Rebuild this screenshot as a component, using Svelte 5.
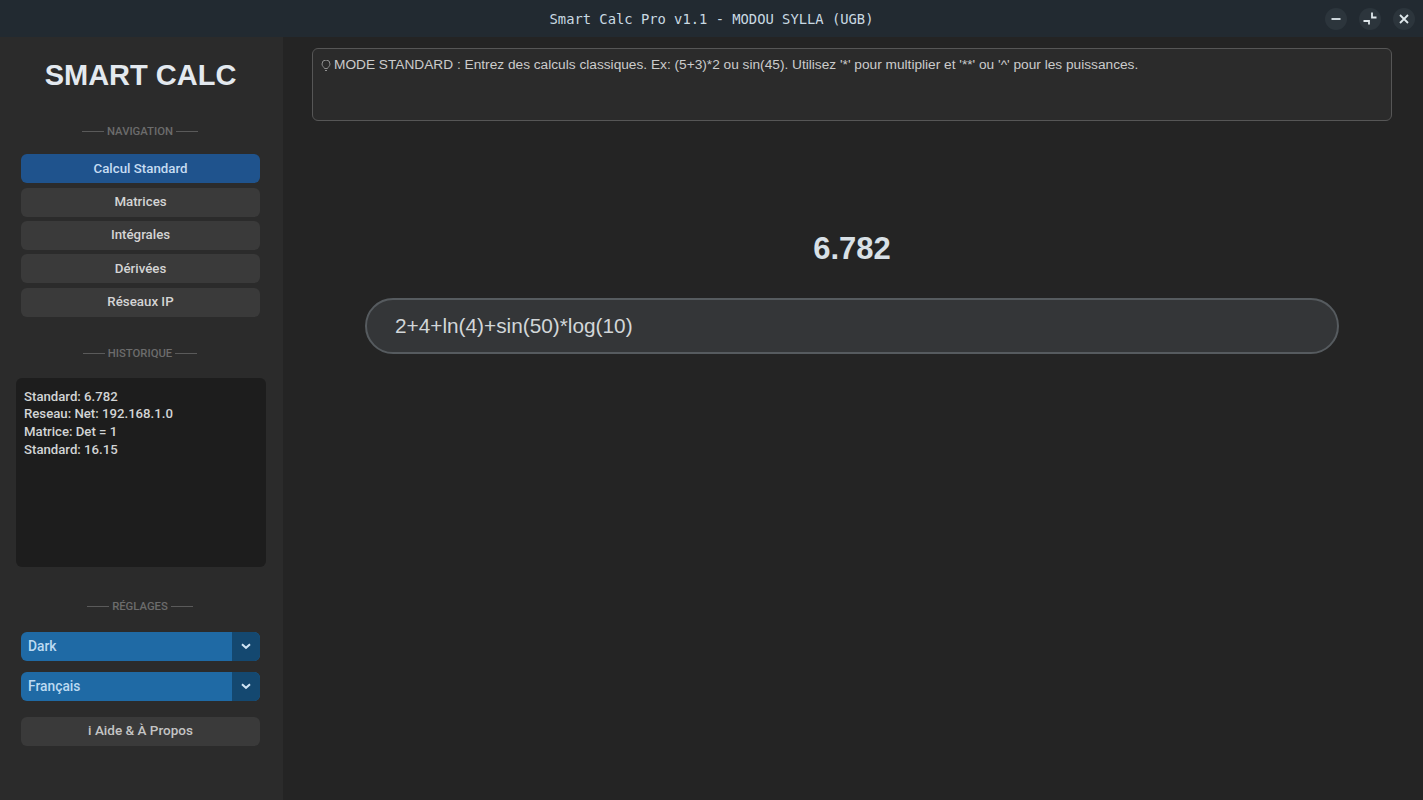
<script>
  const nav = ['Calcul Standard', 'Matrices', 'Intégrales', 'Dérivées', 'Réseaux IP'];
  const history = ['Standard: 6.782', 'Reseau: Net: 192.168.1.0', 'Matrice: Det = 1', 'Standard: 16.15'];
  const selects = ['Dark', 'Français'];
</script>

<div class="window">
  <header class="titlebar">
    <span class="title">Smart Calc Pro v1.1 - MODOU SYLLA (UGB)</span>
    <div class="controls">
      <button class="ctl" aria-label="Réduire">
        <svg width="12" height="12" viewBox="0 0 12 12"><path d="M1.500 6h9" /></svg>
      </button>
      <button class="ctl" aria-label="Restaurer">
        <svg width="16" height="16" viewBox="0 0 16 16"><path d="M10 1.500v5h4.500M1.500 10H7v3.500" /></svg>
      </button>
      <button class="ctl" aria-label="Fermer">
        <svg width="12" height="12" viewBox="0 0 12 12"><path d="M2 2l8 8M10 2l-8 8" /></svg>
      </button>
    </div>
  </header>

  <div class="body">
    <aside class="sidebar">
      <h1 class="logo">SMART CALC</h1>

      <div class="section nav-head">NAVIGATION</div>
      <nav class="nav">
        {#each nav as item, i}
          <button class="btn" class:active={i === 0}>{item}</button>
        {/each}
      </nav>

      <div class="section hist-head">HISTORIQUE</div>
      <div class="history">
        {#each history as line}
          <div>{line}</div>
        {/each}
      </div>

      <div class="section set-head">RÉGLAGES</div>
      <div class="selects">
        {#each selects as s}
          <div class="select">
            <span class="value">{s}</span>
            <span class="arrow">
              <svg width="12" height="12" viewBox="0 0 12 12"><path d="M2 4.200l4 3.600 4-3.600" /></svg>
            </span>
          </div>
        {/each}
      </div>
      <button class="btn help">i Aide &amp; À Propos</button>
    </aside>

    <main class="main">
      <div class="hint"><svg class="bulb" width="10" height="12" viewBox="0 0 10 12"><path d="M3.500 8.500C3 7 1 6.200 1 4a4 4 0 0 1 8 0c0 2.200-2 3-2.500 4.500zM4 10.500h2" /></svg>MODE STANDARD : Entrez des calculs classiques. Ex: (5+3)*2 ou sin(45). Utilisez '*' pour multiplier et '**' ou '^' pour les puissances.</div>
      <div class="result">6.782</div>
      <div class="input">2+4+ln(4)+sin(50)*log(10)</div>
    </main>
  </div>
</div>

<style>
  :global(body) {
    margin: 0;
    background: #242424;
  }
  .window {
    width: 1423px;
    height: 800px;
    display: flex;
    flex-direction: column;
    overflow: hidden;
    font-family: Roboto, "Liberation Sans", sans-serif;
    color: #dce4e8;
  }
  .titlebar {
    height: 37px;
    flex: none;
    background: #222a31;
    display: flex;
    align-items: center;
    justify-content: center;
    position: relative;
  }
  .title {
    font-family: "DejaVu Sans Mono", monospace;
    font-size: 13.800px;
    color: #c9d9e2;
  }
  .controls {
    position: absolute;
    right: 8px;
    top: 8px;
    display: flex;
    gap: 12px;
  }
  .ctl {
    width: 22px;
    height: 22px;
    padding: 0;
    border: 0;
    border-radius: 50%;
    background: #2c353c;
    display: flex;
    align-items: center;
    justify-content: center;
  }
  .ctl path {
    fill: none;
    stroke: #dfe8ec;
    stroke-width: 1.800;
  }
  .body {
    flex: 1;
    display: flex;
    min-height: 0;
  }
  .sidebar {
    width: 283px;
    flex: none;
    background: #2b2b2b;
    box-sizing: border-box;
    padding: 0 23px 0 21px;
    display: flex;
    flex-direction: column;
  }
  .logo {
    margin: 22px 0 0;
    height: 33px;
    line-height: 33px;
    font-family: "Liberation Sans", sans-serif;
    font-size: 29px;
    font-weight: 700;
    text-align: center;
    color: #e3e9ef;
    white-space: nowrap;
  }
  .section {
    display: flex;
    align-items: center;
    justify-content: center;
    gap: 3px;
    height: 14px;
    padding-right: 1px;
    font-size: 11.300px;
    font-weight: 500;
    color: #6c6c6c;
  }
  .section::before,
  .section::after {
    content: "";
    width: 22px;
    height: 1px;
    background: #5a5a5a;
  }
  .nav-head { margin-top: 32px; }
  .hist-head { margin-top: 29.800px; }
  .set-head { margin-top: 33px; }
  .nav {
    margin-top: 16.200px;
    display: flex;
    flex-direction: column;
    gap: 4.400px;
  }
  .btn {
    height: 29px;
    padding: 0 0 1px;
    border: 0;
    border-radius: 6px;
    background: #3a3a3a;
    color: #d4d4d4;
    font-family: inherit;
    font-size: 13.300px;
    font-weight: 500;
    text-align: center;
  }
  .btn.active {
    background: #1f538d;
    color: #c6dcf2;
  }
  .history {
    margin: 17px -6px 0 -5px;
    height: 189px;
    box-sizing: border-box;
    padding: 10px 8px;
    border-radius: 6px;
    background: #1d1d1d;
    color: #d2d4d5;
    font-size: 13.200px;
    line-height: 17.800px;
    font-weight: 500;
  }
  .selects {
    margin-top: 18px;
    display: flex;
    flex-direction: column;
    gap: 11px;
  }
  .select {
    height: 29px;
    display: flex;
    border-radius: 6px;
    overflow: hidden;
    background: #1f6aa5;
    color: #bcdaf2;
    font-size: 13.800px;
    font-weight: 500;
  }
  .value {
    flex: 1;
    padding-left: 7px;
    line-height: 28px;
  }
  .arrow {
    width: 28px;
    background: #144870;
    display: flex;
    align-items: center;
    justify-content: center;
  }
  .arrow path {
    fill: none;
    stroke: #d0e4f4;
    stroke-width: 2;
  }
  .help {
    margin-top: 16px;
    flex: none;
    padding-bottom: 2px;
    color: #c4c4c4;
    font-size: 13.500px;
  }
  .main {
    flex: 1;
    min-width: 0;
    box-sizing: border-box;
    padding: 11px 31px 0 29px;
    display: flex;
    flex-direction: column;
    font-family: "Liberation Sans", sans-serif;
  }
  .hint {
    height: 73px;
    box-sizing: border-box;
    padding: 8px 8px;
    border: 1px solid #565656;
    border-radius: 6px;
    background: #2b2b2b;
    color: #cccccc;
    font-size: 13.700px;
    line-height: 16px;
    white-space: nowrap;
    display: flex;
    align-items: flex-start;
  }
  .bulb {
    flex: none;
    margin: 3px 3px 0 0;
  }
  .bulb path {
    fill: none;
    stroke: #8f8f8f;
    stroke-width: 1;
  }
  .result {
    margin-top: 110px;
    height: 36px;
    line-height: 36px;
    text-align: center;
    font-size: 31px;
    font-weight: 700;
    color: #d8e0e6;
  }
  .input {
    margin: 31px 53px 0;
    height: 56px;
    box-sizing: border-box;
    padding-left: 28px;
    border: 2px solid #565b5f;
    border-radius: 28px;
    background: #343638;
    color: #d2d6d8;
    font-size: 20.800px;
    line-height: 52px;
  }
</style>
